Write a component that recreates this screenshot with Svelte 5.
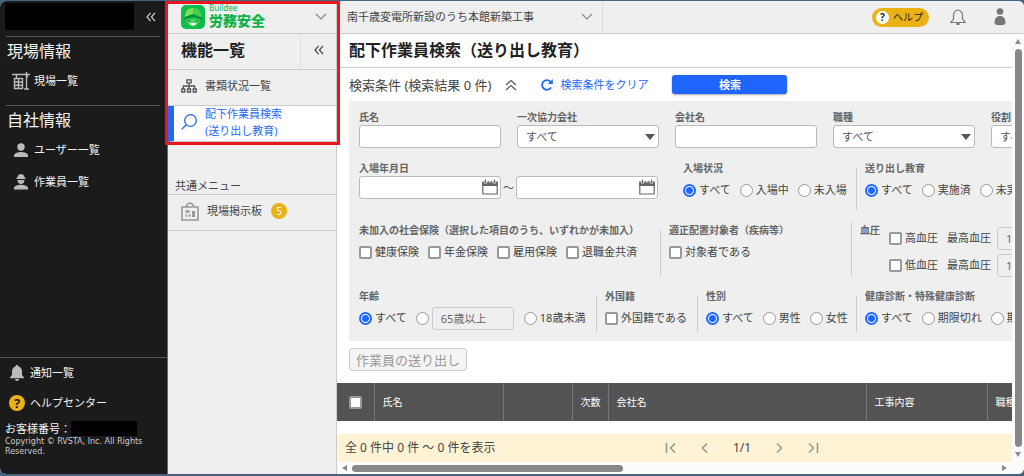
<script>
  const siteMenu = [{ label: "現場一覧", icon: "crane" }];
  const companyMenu = [
    { label: "ユーザー一覧", icon: "user" },
    { label: "作業員一覧", icon: "worker" },
  ];
  const insurances = ["健康保険", "年金保険", "雇用保険", "退職金共済"];
  const pressures = ["高血圧", "低血圧"];
  const columns = [
    { label: "氏名", size: "name" },
    { label: "", size: "blank" },
    { label: "次数", size: "order" },
    { label: "会社名", size: "company" },
    { label: "工事内容", size: "work" },
    { label: "職種", size: "job" },
  ];

  let entry = $state("すべて");
  let education = $state("すべて");
  let age = $state("すべて");
  let gender = $state("すべて");
  let checkup = $state("すべて");
</script>

{#snippet chevron()}
  <svg class="chevron" viewBox="0 0 12 8" width="12" height="8"><path d="M1 1l5 5 5-5" /></svg>
{/snippet}

{#snippet collapse()}
  <svg class="collapse" viewBox="0 0 10 10" width="10" height="10"><path d="M4.6.8L1 5l3.6 4.2M9 .8L5.400 5 9 9.200" /></svg>
{/snippet}

{#snippet sideIcon(name)}
  {#if name === "crane"}
    <svg viewBox="0 0 18 18" width="18" height="18" fill="none" stroke="#bbb" stroke-width="1.400">
      <path d="M0 2.500h18M14.500 0v17M12 17h5M4.500 3v3.500M2.500 6.500h8v10h-8zM2.500 10h8M2.500 13.300h8M6.500 7v9.500M13 2l3 3" />
    </svg>
  {:else if name === "user"}
    <svg viewBox="0 0 14 14" width="14" height="14" fill="#bbb">
      <circle cx="7" cy="4" r="3.700" /><path d="M0 14v-1.500C0 10 4.500 9 7 9s7 1 7 3.500V14z" />
    </svg>
  {:else}
    <svg viewBox="0 0 14 16" width="14" height="16" fill="#bbb">
      <path d="M3.500 3.500C3.500 1.500 5 .5 6 .3h2c1 .2 2.500 1.200 2.500 3.200h1V5h-9V3.500z" />
      <path d="M3.500 6h7c0 2.500-1.500 4-3.500 4S3.500 8.500 3.500 6zM0 15.500V14c0-2.300 4.500-3.200 7-3.200s7 .9 7 3.200v1.500z" />
    </svg>
  {/if}
{/snippet}

{#snippet radio(group, value, get, set)}
  <label class="option">
    <input type="radio" name={group} {value} checked={get() === value} onchange={() => set(value)} />
    {value}
  </label>
{/snippet}

{#snippet calendar()}
  <svg class="calendar" viewBox="0 0 16 16" width="16" height="16">
    <path d="M.8 3h14.400v12H.8z" fill="#fff" stroke="#666" stroke-width="1.200" />
    <path d="M.2 3h15.600v4H.2z" fill="#666" />
    <path d="M3.500.5v4M6.500 1.500v2M9.500 1.500v2M12.500.5v4" stroke="#fff" stroke-width="2.400" />
    <path d="M3.500.5v3.500M12.500.5v3.500M6.500 2v1.500M9.500 2v1.500" stroke="#666" stroke-width="1.300" />
  </svg>
{/snippet}

<div class="window">
  <aside class="sidebar">
    <div class="account">
      <span class="mask"></span>
      <button class="plain" aria-label="メニューを閉じる">{@render collapse()}</button>
    </div>
    <section>
      <h2>現場情報</h2>
      {#each siteMenu as item}
        <a class="item" href="#sites"><span class="icon">{@render sideIcon(item.icon)}</span>{item.label}</a>
      {/each}
    </section>
    <section>
      <h2>自社情報</h2>
      {#each companyMenu as item}
        <a class="item" href="#company"><span class="icon">{@render sideIcon(item.icon)}</span>{item.label}</a>
      {/each}
    </section>
    <footer>
      <a class="item" href="#notices">
        <span class="icon">
          <svg viewBox="0 0 14 16" width="14" height="16" fill="#bbb">
            <path d="M7 0c.8 0 1.300.5 1.300 1.300C10.800 2 12 4 12 6.500V10l2 2.500v.8H0v-.8L2 10V6.500C2 4 3.200 2 5.700 1.300 5.700.5 6.200 0 7 0zM5 14h4c0 1.200-.9 2-2 2s-2-.8-2-2z" />
          </svg>
        </span>通知一覧
      </a>
      <a class="item" href="#help"><span class="icon"><span class="question">?</span></span>ヘルプセンター</a>
      <p class="customer">お客様番号：<span class="mask"></span></p>
      <small>Copyright © RVSTA, Inc. All Rights Reserved.</small>
    </footer>
  </aside>

  <nav class="functions">
    <button class="brand">
      <svg viewBox="0 0 24 24" width="24" height="24">
        <rect width="24" height="24" rx="5" fill="#10bd4b" />
        <path d="M4 12C4 6 7 3 12 3s8 3 8 9l-3-1-5-2-5 2z" fill="#7be05a" />
        <path d="M12 3v6l5 2 3 1c0-6-3-9-8-9z" fill="#45cf50" />
        <path d="M3 15l1-3 8-3 8 3 1 3-5-2-4-1-4 1z" fill="#07913c" />
        <path d="M5 15l4-1.500 3 .5 3-.5 4 1.500-2 4-5 3-5-3z" fill="#4ad35a" />
        <path d="M6.500 16q1.500-1.500 3 0M14.500 16q1.500-1.500 3 0" fill="none" stroke="#067a32" />
        <path d="M8.500 18h7q-1 2.500-3.500 2.500T8.500 18z" fill="#fff" />
      </svg>
      <span class="brand-name"><span>Buildee</span><strong>労務安全</strong></span>
      {@render chevron()}
    </button>
    <div class="heading">
      <h2>機能一覧</h2>
      <button class="plain" aria-label="機能一覧を閉じる">{@render collapse()}</button>
    </div>
    <a class="function" href="#documents">
      <svg viewBox="0 0 16 14" width="16" height="14" fill="none" stroke="#555" stroke-width="1.300">
        <path d="M5.800.8h4.400v3H5.800zM.8 10h3v3h-3zM6.500 10h3v3h-3zM12.200 10h3v3h-3zM8 4v6M2.300 10V7h11.400v3" />
      </svg>
      書類状況一覧
    </a>
    <a class="function active" href="#workers">
      <svg viewBox="0 0 16 16" width="16" height="16" fill="none" stroke="#2468fa" stroke-width="1.300">
        <circle cx="9.500" cy="6.500" r="5.800" /><path d="M5.300 10.700L.6 15.400" />
      </svg>
      <span>配下作業員検索<br />(送り出し教育)</span>
    </a>
    <p class="common">共通メニュー</p>
    <a class="function" href="#board">
      <svg viewBox="0 0 18 19" width="18" height="19" fill="none" stroke="#999" stroke-width="1.600">
        <path d="M1 5h16v13H1zM5 4.500C6 2.500 7.500 1 9 1s3 1.500 4 3.500" />
        <path d="M4.500 9.500h4M10.500 9.500v0M4.500 13.500h1.500M7.500 13.500h2" stroke-width="2.400" />
        <path d="M12.500 9v6" stroke-width="3" />
      </svg>
      現場掲示板 <span class="badge">5</span>
    </a>
    <div class="highlight"></div>
  </nav>

  <div class="main">
    <header>
      <button class="site">南千歳変電所新設のうち本館新築工事{@render chevron()}</button>
      <a class="help" href="#help"><span>?</span>ヘルプ</a>
      <button class="plain" aria-label="通知">
        <svg viewBox="0 0 16 17" width="16" height="17" fill="none" stroke="#777" stroke-width="1.200">
          <path d="M8 1c-3 .6-4.500 2.500-4.500 5.500v3.500L.8 13.500h14.400L12.500 10V6.500C12.500 3.500 11 1.600 8 1z" /><path d="M6.500 15h3" stroke-width="2" />
        </svg>
      </button>
      <button class="plain" aria-label="アカウント">
        <svg viewBox="0 0 12 18" width="12" height="18" fill="#777">
          <circle cx="6" cy="3.500" r="3.300" /><path d="M.5 15C.5 10.500 2.500 8 6 8s5.500 2.500 5.500 7c0 3-11 3-11 0z" />
        </svg>
      </button>
    </header>

    <div class="body">
      <div class="content">
        <h1>配下作業員検索（送り出し教育）</h1>
        <div class="conditions">
          <span>検索条件 (検索結果 0 件)</span>
          <button class="plain fold" aria-label="検索条件を閉じる">
            <svg viewBox="0 0 12 12" width="12" height="12" fill="none" stroke="#555" stroke-width="1.200"><path d="M1 6l5-4.500L11 6M1 11l5-4.500 5 4.500" /></svg>
          </button>
          <button class="clear">
            <svg viewBox="0 0 12 12" width="12" height="12" fill="none" stroke="#2468fa" stroke-width="1.800">
              <path d="M10 8.500A4.800 4.800 0 1 1 9.500 2.800" /><path d="M11.800 0v5H6.800z" fill="#2468fa" stroke="none" />
            </svg>
            検索条件をクリア
          </button>
          <button class="search">検索</button>
        </div>

        <form>
          <div class="row">
            <label class="field">氏名<input type="text" /></label>
            <label class="field">一次協力会社<select><option>すべて</option></select></label>
            <label class="field">会社名<input type="text" /></label>
            <label class="field">職種<select><option>すべて</option></select></label>
            <label class="field">役割<select><option>すべて</option></select></label>
          </div>

          <div class="row">
            <fieldset class="dates">
              <legend>入場年月日</legend>
              <div class="range">
                <span class="date"><input type="text" aria-label="開始日" />{@render calendar()}</span>
                〜
                <span class="date"><input type="text" aria-label="終了日" />{@render calendar()}</span>
              </div>
            </fieldset>
            <fieldset class="entry">
              <legend>入場状況</legend>
              <div class="options">
                {#each ["すべて", "入場中", "未入場"] as value}
                  {@render radio("entry", value, () => entry, (v) => (entry = v))}
                {/each}
              </div>
            </fieldset>
            <fieldset class="split">
              <legend>送り出し教育</legend>
              <div class="options">
                {#each ["すべて", "実施済", "未実施"] as value}
                  {@render radio("education", value, () => education, (v) => (education = v))}
                {/each}
              </div>
            </fieldset>
          </div>

          <div class="row">
            <fieldset class="insurance">
              <legend>未加入の社会保険（選択した項目のうち、いずれかが未加入）</legend>
              <div class="options">
                {#each insurances as name}
                  <label class="option"><input type="checkbox" />{name}</label>
                {/each}
              </div>
            </fieldset>
            <fieldset class="split placement">
              <legend>適正配置対象者（疾病等）</legend>
              <div class="options"><label class="option"><input type="checkbox" />対象者である</label></div>
            </fieldset>
            <div class="split pressure" role="group" aria-labelledby="pressure">
              <span class="caption" id="pressure">血圧</span>
              <div class="lines">
                {#each pressures as name, i}
                  <div class="options">
                    <label class="option"><input type="checkbox" />{name}</label>
                    <label class="option value">最高血圧<input type="text" value={i ? "100" : "140"} disabled /></label>
                  </div>
                {/each}
              </div>
            </div>
          </div>

          <div class="row">
            <fieldset class="age">
              <legend>年齢</legend>
              <div class="options">
                {@render radio("age", "すべて", () => age, (v) => (age = v))}
                <div class="option">
                  <input type="radio" name="age" value="65" aria-label="年齢を指定" />
                  <input class="years" type="text" value="65歳以上" aria-label="年齢" disabled />
                </div>
                {@render radio("age", "18歳未満", () => age, (v) => (age = v))}
              </div>
            </fieldset>
            <fieldset class="split foreign">
              <legend>外国籍</legend>
              <div class="options"><label class="option"><input type="checkbox" />外国籍である</label></div>
            </fieldset>
            <fieldset class="split gender">
              <legend>性別</legend>
              <div class="options">
                {#each ["すべて", "男性", "女性"] as value}
                  {@render radio("gender", value, () => gender, (v) => (gender = v))}
                {/each}
              </div>
            </fieldset>
            <fieldset class="split">
              <legend>健康診断・特殊健康診断</legend>
              <div class="options">
                {#each ["すべて", "期限切れ", "期限内"] as value}
                  {@render radio("checkup", value, () => checkup, (v) => (checkup = v))}
                {/each}
              </div>
            </fieldset>
          </div>
        </form>

        <button class="send" disabled>作業員の送り出し</button>

        <div class="list">
          <table>
            <thead>
              <tr>
                <th class="check"><input type="checkbox" aria-label="すべて選択" /></th>
                {#each columns as column}
                  <th class={column.size}>{column.label}</th>
                {/each}
              </tr>
            </thead>
          </table>
        </div>

        <div class="pager">
          <span class="total">全 0 件中 0 件 〜 0 件を表示</span>
          <button class="plain" aria-label="最初"><svg viewBox="0 0 12 12" width="12" height="12"><path d="M1.500 1v10M10 1.500L5.500 6l4.500 4.500" /></svg></button>
          <button class="plain" aria-label="前へ"><svg viewBox="0 0 12 12" width="12" height="12"><path d="M8 1.500L3.500 6 8 10.500" /></svg></button>
          <span>1/1</span>
          <button class="plain" aria-label="次へ"><svg viewBox="0 0 12 12" width="12" height="12"><path d="M4 1.500L8.500 6 4 10.500" /></svg></button>
          <button class="plain" aria-label="最後"><svg viewBox="0 0 12 12" width="12" height="12"><path d="M10.500 1v10M2 1.500L6.500 6 2 10.500" /></svg></button>
        </div>

        <div class="scroll-x">
          <svg viewBox="0 0 5 6" width="5" height="6"><path d="M5 0v6L0 3z" /></svg>
          <div class="track"><div class="thumb"></div></div>
          <svg viewBox="0 0 5 6" width="5" height="6"><path d="M0 0v6l5-3z" /></svg>
        </div>
      </div>

      <div class="scroll-y">
        <svg viewBox="0 0 6 5" width="6" height="5"><path d="M0 5h6L3 0z" /></svg>
        <div class="thumb"></div>
        <svg viewBox="0 0 6 5" width="6" height="5"><path d="M0 0h6L3 5z" /></svg>
      </div>
    </div>
  </div>
</div>

<style>
  :global(body) {
    background: #46647f;
  }
  * {
    box-sizing: border-box;
    margin: 0;
    padding: 0;
  }
  .window {
    display: flex;
    height: calc(100vh - 3px);
    margin: 1px 0 2px;
    border-radius: 6px;
    overflow: hidden;
    background: #fff;
    color: #444;
    font-family: "Noto Sans", "Noto Sans CJK JP", sans-serif;
    font-size: 11px;
    line-height: 16px;
    white-space: nowrap;
  }
  button,
  input,
  select {
    font: inherit;
    color: inherit;
  }
  button {
    border: 0;
    background: none;
  }
  a {
    color: inherit;
    text-decoration: none;
  }
  svg {
    flex: none;
  }
  .plain {
    display: grid;
    place-items: center;
  }
  .chevron,
  .collapse {
    fill: none;
    stroke: #888;
    stroke-width: 1.2;
  }
  .collapse {
    stroke: #444;
  }

  .sidebar {
    flex: 0 0 168px;
    display: flex;
    flex-direction: column;
    background: #1b1b1b;
    border-right: 1px solid #666;
    color: #f2f2f2;
  }
  .mask {
    background: #000;
  }
  .account {
    display: flex;
    align-items: center;
    justify-content: space-between;
    height: 35px;
    padding: 2px 11px 6px 5px;
  }
  .account .mask {
    width: 129px;
    height: 27px;
  }
  .account .collapse {
    stroke: #ccc;
  }
  .sidebar section {
    padding-bottom: 8px;
  }
  .sidebar section::before {
    content: "";
    display: block;
    height: 1px;
    margin: 0 7px 0 6px;
    background: #555;
  }
  .sidebar h2 {
    height: 28px;
    padding-left: 7px;
    font-size: 16px;
    font-weight: 400;
    line-height: 28px;
  }
  .sidebar .item {
    display: flex;
    align-items: center;
    height: 32px;
  }
  .icon {
    display: grid;
    place-items: center;
    width: 26px;
    margin-left: 8px;
  }
  .sidebar footer {
    margin-top: auto;
    padding-bottom: 17px;
    border-top: 1px solid #555;
  }
  footer .icon {
    width: 18px;
    margin-right: 4px;
  }
  .sidebar footer .item {
    height: 30px;
  }
  .question {
    width: 16px;
    height: 16px;
    border-radius: 50%;
    background: #ebb216;
    color: #222;
    font-size: 13px;
    font-weight: 700;
    text-align: center;
  }
  .customer {
    display: flex;
    align-items: center;
    height: 17px;
    margin-top: 2px;
    padding-left: 5px;
  }
  .customer .mask {
    width: 66px;
    height: 15px;
  }
  small {
    display: block;
    padding: 0 16px 0 5px;
    color: #ccc;
    font-family: "DejaVu Sans", sans-serif;
    font-size: 8px;
    line-height: 10px;
    white-space: normal;
  }

  .functions {
    position: relative;
    flex: 0 0 169px;
    background: #efefef;
    border-right: 1px solid #ccc;
  }
  .brand {
    display: flex;
    align-items: center;
    gap: 4px;
    width: 100%;
    height: 33px;
    padding: 0 9px 0 13px;
    border-bottom: 1px solid #ccc;
  }
  .brand .chevron {
    margin-left: auto;
  }
  .brand-name {
    display: flex;
    flex-direction: column;
    color: #10b347;
    font-size: 8px;
    line-height: 8px;
    text-align: left;
  }
  .brand-name strong {
    font-size: 14px;
    font-weight: 900;
    line-height: 18px;
  }
  .heading {
    display: flex;
    height: 36px;
    border-bottom: 1px solid #ccc;
  }
  h1,
  .heading h2 {
    color: #222;
    font-size: 16px;
    line-height: 32px;
  }
  .heading h2 {
    flex: 1;
    padding-left: 13px;
  }
  .heading .plain {
    width: 36px;
    padding-bottom: 4px;
    border-left: 1px solid #ddd;
  }
  .function {
    display: flex;
    align-items: center;
    height: 36px;
    padding: 0 0 3px 13px;
    border-bottom: 1px solid #ccc;
  }
  .function svg {
    margin-right: 8px;
  }
  .active {
    padding-left: 7px;
    border-left: 6px solid #2468fa;
    background: #fff;
    color: #2468fa;
    line-height: 17px;
  }
  .common {
    height: 53px;
    padding: 36px 7px 0;
    border-bottom: 1px solid #ccc;
  }
  .badge {
    width: 16px;
    height: 16px;
    margin-left: 9px;
    border-radius: 50%;
    background: #ebb216;
    color: #fff;
    font-size: 10px;
    text-align: center;
  }
  .highlight {
    position: absolute;
    inset: 0 -4px auto -3px;
    height: 144px;
    border: 3px solid #e8161d;
    z-index: 1;
    pointer-events: none;
  }

  .main {
    flex: 1;
    min-width: 0;
    display: flex;
    flex-direction: column;
  }
  header {
    display: flex;
    align-items: center;
    height: 33px;
    padding-right: 18px;
    border-bottom: 1px solid #ccc;
    background: #efefef;
  }
  .site {
    display: flex;
    align-items: center;
    justify-content: space-between;
    width: 266px;
    height: 32px;
    margin-right: auto;
    padding: 0 9px 0 10px;
    border-right: 1px solid #ddd;
  }
  .help {
    display: flex;
    align-items: center;
    gap: 4px;
    height: 19px;
    padding: 0 6px 0 4px;
    margin-right: 21px;
    border-radius: 10px;
    background: #ebb216;
    color: #222;
    font-size: 10px;
  }
  .help span {
    width: 13px;
    height: 13px;
    border-radius: 50%;
    background: #fff;
    font-weight: 700;
    line-height: 13px;
    text-align: center;
  }
  header .plain + .plain {
    margin-left: 28px;
  }
  .body {
    flex: 1;
    min-height: 0;
    display: flex;
  }
  .content {
    flex: 1;
    min-width: 0;
    display: flex;
    flex-direction: column;
    overflow: hidden;
  }
  h1 {
    height: 34px;
    padding-left: 12px;
    border-bottom: 1px solid #ccc;
  }
  .conditions {
    display: flex;
    align-items: center;
    height: 33px;
    padding-left: 12px;
    font-size: 13px;
  }
  .fold {
    margin: 0 24px 0 14px;
  }
  .clear {
    display: flex;
    align-items: center;
    gap: 7px;
    color: #2468fa;
    font-size: 11px;
  }
  .search {
    width: 115px;
    height: 19px;
    margin-left: 24px;
    border-radius: 3px;
    background: #1f66ff;
    box-shadow: 0 1px 2px #aaa;
    color: #fff;
    font-size: 11px;
    font-weight: 700;
  }

  form {
    display: flex;
    flex-direction: column;
    gap: 12px;
    margin-left: 12px;
    padding: 8px 0 9px 10px;
    background: #efefef;
  }
  .row {
    display: flex;
  }
  .field,
  legend,
  .caption {
    color: #666;
    font-size: 10px;
    font-weight: 700;
  }
  .field {
    flex: 0 0 142px;
    margin-right: 16px;
  }
  input[type="text"],
  select {
    display: block;
    width: 142px;
    height: 23px;
    padding: 0 8px;
    border: 1px solid #bbb;
    border-radius: 3px;
    background: #fff;
    color: #555;
    font-size: 11px;
    font-weight: 400;
  }
  select {
    appearance: none;
    background: #fff
      url("data:image/svg+xml,%3Csvg xmlns='http://www.w3.org/2000/svg' viewBox='0 0 10 6'%3E%3Cpath d='M0 0h10L5 6z' fill='%23555'/%3E%3C/svg%3E")
      right 3px center / 10px 6px no-repeat;
  }
  input[type="text"]:disabled {
    border-color: #ccc;
    background: #efefef;
    color: #666;
  }
  fieldset {
    flex: none;
    min-width: 0;
    border: 0;
  }
  .split {
    padding-left: 8px;
    border-left: 1px solid #ccc;
  }
  .dates {
    width: 324px;
    height: 50px;
  }
  .entry {
    width: 173px;
  }
  .insurance {
    width: 301px;
    height: 54px;
  }
  .placement {
    width: 191px;
  }
  .age {
    width: 237px;
    height: 42px;
  }
  .foreign {
    width: 101px;
  }
  .gender {
    width: 159px;
  }
  .range {
    display: flex;
    align-items: center;
    gap: 2px;
  }
  .date {
    position: relative;
  }
  .calendar {
    position: absolute;
    top: 3px;
    right: 3px;
  }
  .options {
    display: flex;
    align-items: center;
    gap: 9px;
    height: 28px;
  }
  .option {
    display: flex;
    align-items: center;
    gap: 3px;
  }
  input[type="radio"],
  input[type="checkbox"] {
    appearance: none;
    flex: none;
    width: 13px;
    height: 13px;
    border: 2px solid #999;
    border-radius: 2px;
    background: #fff;
  }
  input[type="radio"] {
    border-width: 1px;
    border-radius: 50%;
  }
  input[type="radio"]:checked {
    border: 2px solid #1f66ff;
    background: radial-gradient(#1f66ff 3px, #fff 4px);
  }
  .pressure {
    display: flex;
    gap: 9px;
    height: 54px;
  }
  .lines {
    display: grid;
    gap: 3px;
    padding-top: 4px;
  }
  .lines .options {
    height: 24px;
  }
  .option.value {
    gap: 6px;
  }
  input.years {
    width: 82px;
    margin-right: 1px;
  }
  .send {
    align-self: flex-start;
    flex: none;
    height: 23px;
    margin: 7px 0 12px 12px;
    padding: 0 6px;
    border: 1px solid #ccc;
    border-radius: 3px;
    background: #f4f4f4;
    color: #999;
    font-size: 13px;
    line-height: 20px;
  }

  .list {
    flex: 1;
    min-height: 0;
    overflow: hidden;
  }
  table {
    table-layout: fixed;
    width: 800px;
    border-collapse: collapse;
  }
  th {
    height: 38px;
    padding-left: 8px;
    border-right: 1px solid #777;
    background: #535353;
    color: #fff;
    font-size: 10px;
    font-weight: 400;
    text-align: left;
  }
  th input {
    display: block;
    margin-left: 4px;
  }
  .check {
    width: 37px;
  }
  .name {
    width: 129px;
  }
  .blank {
    width: 69px;
  }
  .order {
    width: 36px;
  }
  .company {
    width: 258px;
  }
  .work {
    width: 121px;
  }
  .pager {
    display: flex;
    align-items: center;
    gap: 22px;
    height: 28px;
    padding-left: 8px;
    background: #fff3d6;
    font-size: 12px;
  }
  .total {
    width: 298px;
  }
  .pager svg {
    fill: none;
    stroke: #999;
    stroke-width: 1.6;
  }

  .scroll-x {
    display: flex;
    align-items: center;
    gap: 5px;
    height: 12px;
    padding: 0 5px;
    background: #fcfcfc;
    fill: #888;
  }
  .track {
    flex: 1;
  }
  .thumb {
    border-radius: 4px;
    background: #888;
  }
  .scroll-x .thumb {
    width: 42%;
    height: 7px;
  }
  .scroll-y {
    display: flex;
    flex-direction: column;
    align-items: center;
    gap: 5px;
    width: 12px;
    padding: 5px 0 17px;
    background: #fcfcfc;
    fill: #888;
  }
  .scroll-y .thumb {
    flex: 1;
    width: 7px;
  }
</style>
